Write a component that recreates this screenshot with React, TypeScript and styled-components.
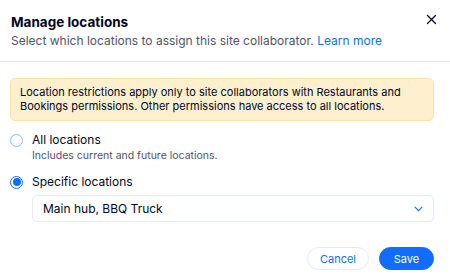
import React, { useState } from "react";
import styled, { createGlobalStyle } from "styled-components";

const Global = createGlobalStyle`
  html, body { margin: 0; padding: 0; background: #fff; }
  body { font-family: Inter, "Open Sans", sans-serif; color: #000624; }
`;

const Modal = styled.div`
  width: 450px;
  height: 279px;
  display: flex;
  flex-direction: column;
  box-sizing: border-box;
`;

const Header = styled.header`
  position: relative;
  padding: 14px 16px 12px 11px;
  border-bottom: 1px solid #e5e7ee;
`;

const Title = styled.h1`
  margin: 0;
  font-size: 13.5px;
  font-weight: 700;
  line-height: 16px;
  color: #000624;
`;

const Subtitle = styled.p`
  margin: 3px 0 0;
  font-size: 12px;
  line-height: 16px;
  color: #50536a;
`;

const Link = styled.a`
  color: #116dff;
  text-decoration: none;
`;

const Close = styled.button`
  position: absolute;
  top: 14px;
  right: 13px;
  width: 11px;
  height: 11px;
  padding: 0;
  border: 0;
  background: none;
  color: #000624;
  display: flex;
`;

const Body = styled.div`
  padding: 16px 16px 0 10px;
  display: flex;
  flex-direction: column;
`;

const Notice = styled.div`
  background: #fef0cf;
  border: 1px solid #fde2a3;
  border-radius: 5px;
  padding: 7px 9px;
  font-size: 11px;
  line-height: 13.5px;
  color: #000624;
`;

const Option = styled.label`
  display: grid;
  grid-template-columns: 22px 1fr;
  align-items: center;
  margin-top: 10px;
`;

const Radio = styled.span<{ $checked?: boolean }>`
  width: 13px;
  height: 13px;
  border-radius: 50%;
  border: 1px solid ${(p) => (p.$checked ? "#116dff" : "#8cb6ff")};
  box-sizing: border-box;
  display: flex;
  align-items: center;
  justify-content: center;
  background: #fff;
  &::after {
    content: "";
    display: ${(p) => (p.$checked ? "block" : "none")};
    width: 8px;
    height: 8px;
    border-radius: 50%;
    background: #116dff;
  }
`;

const Label = styled.span`
  font-size: 12px;
  line-height: 18px;
  color: #000624;
`;

const Hint = styled.span`
  grid-column: 2;
  font-size: 10.5px;
  line-height: 14px;
  color: #50536a;
`;

const Select = styled.div`
  grid-column: 2;
  margin-top: 4px;
  height: 27px;
  border: 1px solid #e3eafa;
  border-radius: 5px;
  display: flex;
  align-items: center;
  justify-content: space-between;
  padding: 0 10px;
  box-sizing: border-box;
  font-size: 12px;
  color: #000624;
`;

const Footer = styled.footer`
  margin-top: auto;
  padding: 0 16px 9px 0;
  display: flex;
  justify-content: flex-end;
  gap: 10px;
`;

const Button = styled.button<{ $primary?: boolean }>`
  height: 23px;
  width: ${(p) => (p.$primary ? 55 : 62)}px;
  padding: 0;
  border-radius: 12px;
  font-family: inherit;
  font-size: 11px;
  border: 1px solid ${(p) => (p.$primary ? "#116dff" : "#e3eafa")};
  background: ${(p) => (p.$primary ? "#116dff" : "#fff")};
  color: ${(p) => (p.$primary ? "#fff" : "#116dff")};
`;

export default function App() {
  const [choice, setChoice] = useState<"all" | "specific">("specific");
  return (
    <Modal>
      <Global />
      <Header>
        <Title>Manage locations</Title>
        <Subtitle>
          Select which locations to assign this site collaborator. <Link href="#">Learn more</Link>
        </Subtitle>
        <Close aria-label="Close">
          <svg width="11" height="11" viewBox="0 0 11 11">
            <path d="M1.5 1.5l8 8M9.5 1.5l-8 8" stroke="currentColor" strokeWidth="1.3" strokeLinecap="round" />
          </svg>
        </Close>
      </Header>
      <Body>
        <Notice>
          Location restrictions apply only to site collaborators with Restaurants and
          Bookings permissions. Other permissions have access to all locations.
        </Notice>
        <Option onClick={() => setChoice("all")}>
          <Radio $checked={choice === "all"} />
          <Label>All locations</Label>
          <Hint>Includes current and future locations.</Hint>
        </Option>
        <Option onClick={() => setChoice("specific")}>
          <Radio $checked={choice === "specific"} />
          <Label>Specific locations</Label>
          <Select>
            <span>Main hub, BBQ Truck</span>
            <svg width="9" height="6" viewBox="0 0 9 6">
              <path d="M1 1.2l3.5 3.5 3.5-3.5" fill="none" stroke="#116dff" strokeWidth="1.1" strokeLinecap="round" />
            </svg>
          </Select>
        </Option>
      </Body>
      <Footer>
        <Button>Cancel</Button>
        <Button $primary>Save</Button>
      </Footer>
    </Modal>
  );
}
